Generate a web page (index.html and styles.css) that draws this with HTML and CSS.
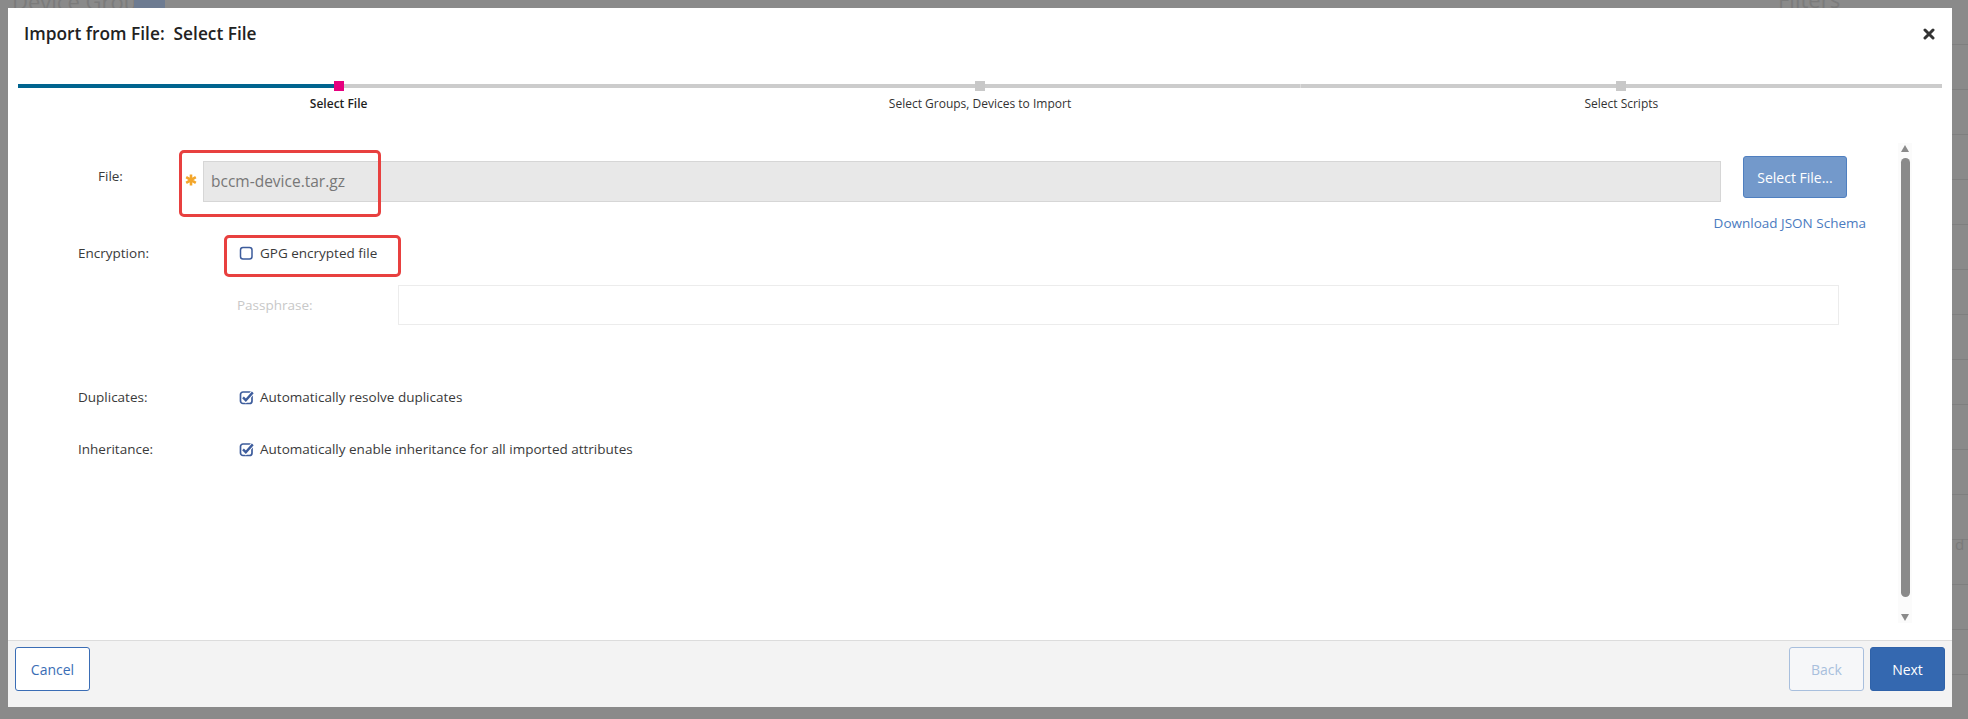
FILE: index.html
```html
<!DOCTYPE html>
<html lang="en">
<head>
<meta charset="utf-8">
<title>Import from File</title>
<link rel="stylesheet" href="styles.css">
</head>
<body>
<div class="app-bg" aria-hidden="true">
  <span class="bg-title">Device Groups</span>
  <span class="bg-btn"></span>
  <span class="bg-filters">Filters</span>
  <span class="bg-strip"></span>
  <span class="bg-d">d</span>
</div>

<div class="modal">
  <header class="modal-header">
    <h1 class="modal-title">Import from File:&nbsp; Select File</h1>
    <button class="close" type="button" aria-label="Close">
      <svg width="12" height="12" viewBox="0 0 12 12"><path d="M2 2 L10 10 M10 2 L2 10" stroke="#333" stroke-width="3" stroke-linecap="round"/></svg>
    </button>
  </header>

  <div class="stepper">
    <div class="step">
      <div class="track track-done"><span class="marker marker-active"></span></div>
      <div class="step-label step-label-active">Select File</div>
    </div>
    <div class="step">
      <div class="track"><span class="marker"></span></div>
      <div class="step-label">Select Groups, Devices to Import</div>
    </div>
    <div class="step">
      <div class="track"><span class="marker"></span></div>
      <div class="step-label">Select Scripts</div>
    </div>
  </div>

  <div class="modal-body">
    <div class="form">
      <div class="row row-file">
        <label class="label label-file">File:</label>
        <div class="file-field">
          <span class="req">
            <svg width="12" height="12" viewBox="0 0 12 12"><path d="M6 0.5 V11.5 M1.2 3.2 L10.8 8.8 M10.8 3.2 L1.2 8.8" stroke="#f3a62b" stroke-width="2.6"/></svg>
          </span>
          <div class="file-input">bccm-device.tar.gz</div>
          <span class="annot annot-file"></span>
        </div>
        <div class="file-actions">
          <button class="btn btn-select" type="button">Select File...</button>
          <a class="link" href="#">Download JSON Schema</a>
        </div>
      </div>

      <div class="row row-enc">
        <span class="label">Encryption:</span>
        <div class="check-wrap">
          <span class="check">
            <svg width="15" height="15" viewBox="0 0 15 15"><rect x="1.5" y="1.5" width="11.5" height="11.5" rx="2.5" fill="#fff" stroke="#3d5c9c" stroke-width="1.5"/></svg>
          </span>
          <span class="check-text">GPG encrypted file</span>
          <span class="annot annot-enc"></span>
        </div>
      </div>

      <div class="row row-pass">
        <span class="label label-pass">Passphrase:</span>
        <div class="pass-input"></div>
      </div>

      <div class="row row-dup">
        <span class="label">Duplicates:</span>
        <div class="check-wrap">
          <span class="check">
            <svg width="15" height="15" viewBox="0 0 15 15"><rect x="1.5" y="2" width="11.5" height="11.5" rx="2.5" fill="none" stroke="#3d5c9c" stroke-width="1.7"/><path d="M4 7.4 L6.8 10.2 L13.8 2.4" fill="none" stroke="#fff" stroke-width="4.4"/><path d="M4 7.4 L6.8 10.2 L13.8 2.4" fill="none" stroke="#3d5c9c" stroke-width="2.4"/></svg>
          </span>
          <span class="check-text">Automatically resolve duplicates</span>
        </div>
      </div>

      <div class="row row-inh">
        <span class="label">Inheritance:</span>
        <div class="check-wrap">
          <span class="check">
            <svg width="15" height="15" viewBox="0 0 15 15"><rect x="1.5" y="2" width="11.5" height="11.5" rx="2.5" fill="none" stroke="#3d5c9c" stroke-width="1.7"/><path d="M4 7.4 L6.8 10.2 L13.8 2.4" fill="none" stroke="#fff" stroke-width="4.4"/><path d="M4 7.4 L6.8 10.2 L13.8 2.4" fill="none" stroke="#3d5c9c" stroke-width="2.4"/></svg>
          </span>
          <span class="check-text">Automatically enable inheritance for all imported attributes</span>
        </div>
      </div>
    </div>

    <div class="scrollbar" aria-hidden="true">
      <span class="sb-up"></span>
      <span class="sb-thumb"></span>
      <span class="sb-down"></span>
    </div>
  </div>

  <footer class="modal-footer">
    <button class="btn btn-outline" type="button">Cancel</button>
    <div class="footer-right">
      <button class="btn btn-disabled" type="button">Back</button>
      <button class="btn btn-primary" type="button">Next</button>
    </div>
  </footer>
</div>
</body>
</html>
```

FILE: styles.css
```css
* { box-sizing: border-box; }

html, body {
  margin: 0;
  height: 719px;
  overflow: hidden;
}

body {
  background: #8a8a8a;
  padding: 8px 0 0 8px;
  font-family: "Open Sans", "Noto Sans", sans-serif;
  color: #333;
  position: relative;
}

/* faint app behind the overlay */
.app-bg span { position: absolute; }
.bg-title {
  left: 12px; top: -14px;
  font-size: 22px; color: #7b7b7b;
}
.bg-btn {
  left: 134px; top: 0; width: 31px; height: 8px;
  background: #6d7b91;
}
.bg-filters {
  left: 1778px; top: -16px;
  font-size: 22px; color: #7b7b7b;
}
.bg-strip {
  left: 1952px; top: 0; width: 16px; height: 719px;
  background: repeating-linear-gradient(to bottom, transparent 0, transparent 44px, #7f7f7f 44px, #7f7f7f 45px);
}
.bg-d {
  left: 1955px; top: 534px;
  font-size: 15px; color: #7a7a7a;
}

.modal {
  position: relative;
  width: 1944px;
  height: 699px;
  background: #fff;
  display: flex;
  flex-direction: column;
}

/* header */
.modal-header {
  display: flex;
  justify-content: space-between;
  align-items: center;
  padding: 14px 17px 0 16px;
  height: 38px;
}
.modal-title {
  margin: 0;
  font-size: 17.3px;
  line-height: 24px;
  font-weight: 600;
  color: #222;
}
.close {
  border: 0; background: none; padding: 0;
  width: 12px; height: 12px;
  display: flex;
}

/* stepper */
.stepper {
  display: grid;
  grid-template-columns: repeat(3, 1fr);
  margin: 35px 10px 0;
}
.step { display: flex; flex-direction: column; align-items: stretch; }
.track {
  height: 10px;
  display: flex;
  justify-content: center;
  align-items: center;
  background: linear-gradient(#ccc, #ccc) center / 100% 4px no-repeat;
}
.track-done {
  background:
    linear-gradient(#00648f, #00648f) left center / 50% 4px no-repeat,
    linear-gradient(#ccc, #ccc) center / 100% 4px no-repeat;
}
.marker {
  width: 10px; height: 10px;
  background: #c8c8c8;
}
.marker-active { background: #e6007e; }
.step-label {
  margin-top: 5px;
  text-align: center;
  font-size: 12px;
  line-height: 16px;
  color: #333;
}
.step-label-active { font-weight: 600; color: #1e1e1e; }

/* body */
.modal-body {
  flex: 1;
  display: flex;
  min-height: 0;
}
.form {
  width: 1858px;
  padding: 44px 0 0 70px;
  font-size: 13.5px;
}
.row { display: flex; align-items: flex-start; }
.label {
  width: 161px;
  flex: none;
  line-height: 18px;
  color: #3a3a3a;
}

.row-file { height: 75px; }
.label-file {
  width: 107px;
  padding-left: 20px;
  margin-top: 11px;
}
.file-field {
  position: relative;
  flex: 1;
  display: flex;
  align-items: center;
  margin-top: 5px;
}
.req {
  width: 18px; flex: none;
  display: flex;
  padding-bottom: 3px;
}
.file-input {
  flex: 1;
  height: 41px;
  background: #e8e8e8;
  border: 1px solid #d6d6d6;
  padding: 0 7px;
  font-size: 15.5px;
  line-height: 39px;
  color: #777;
}
.file-actions {
  width: 145px;
  flex: none;
  display: flex;
  flex-direction: column;
  align-items: flex-end;
}
.btn {
  font-family: inherit;
  font-size: 14px;
  height: 44px;
  width: 75px;
  border-radius: 3px;
  padding: 0;
  cursor: pointer;
}
.btn-select {
  width: 104px;
  height: 42px;
  margin-right: 19px;
  background: #7399cb;
  border: 1px solid #4f7fc0;
  color: #fff;
}
.link {
  margin-top: 17px;
  white-space: nowrap;
  line-height: 16px;
  color: #4b7bc0;
  text-decoration: none;
}

.annot {
  position: absolute;
  border: 3px solid #e8403f;
  border-radius: 5px;
  pointer-events: none;
}
.annot-file { left: -6px; top: -11px; width: 202px; height: 67px; }
.annot-enc { left: -15px; top: -9px; width: 177px; height: 42px; }

.row-enc { margin-top: 13px; }
.check-wrap {
  position: relative;
  display: flex;
  align-items: center;
  line-height: 18px;
}
.check { width: 21px; flex: none; display: flex; }
.check-text { color: #3a3a3a; }

.row-pass { margin-top: 23px; align-items: center; }
.label-pass {
  margin-left: 159px;
  color: #c8c8c8;
}
.pass-input {
  flex: 1;
  height: 40px;
  margin-right: 27px;
  border: 1px solid #ececec;
  background: #fff;
}

.row-dup { margin-top: 63px; }
.row-inh { margin-top: 34px; }

/* scrollbar */
.scrollbar {
  margin: 31px 0 0 32px;
  width: 14px;
  height: 480px;
  background: #fbfbfb;
  display: flex;
  flex-direction: column;
  align-items: center;
}
.sb-up {
  margin-top: 2px;
  width: 0; height: 0;
  border-left: 4.5px solid transparent;
  border-right: 4.5px solid transparent;
  border-bottom: 7px solid #8a8a8a;
}
.sb-thumb {
  margin-top: 6px;
  width: 9px;
  height: 439px;
  border-radius: 5px;
  background: #8a8a8a;
}
.sb-down {
  margin-top: 17px;
  width: 0; height: 0;
  border-left: 4.5px solid transparent;
  border-right: 4.5px solid transparent;
  border-top: 7px solid #8a8a8a;
}

/* footer */
.modal-footer {
  height: 67px;
  flex: none;
  border-top: 1px solid #dcdcdc;
  background: #f3f3f3;
  padding: 6px 7px 0;
  display: flex;
  justify-content: space-between;
  align-items: flex-start;
}
.footer-right { display: flex; gap: 6px; }
.btn-outline {
  background: #fff;
  border: 1px solid #3a6db5;
  color: #3a6db5;
}
.btn-disabled {
  background: #f6f7f9;
  border: 1px solid #a8bfdd;
  color: #a8bfdd;
}
.btn-primary {
  background: #3468b0;
  border: 1px solid #2f62a9;
  color: #fff;
}
```
